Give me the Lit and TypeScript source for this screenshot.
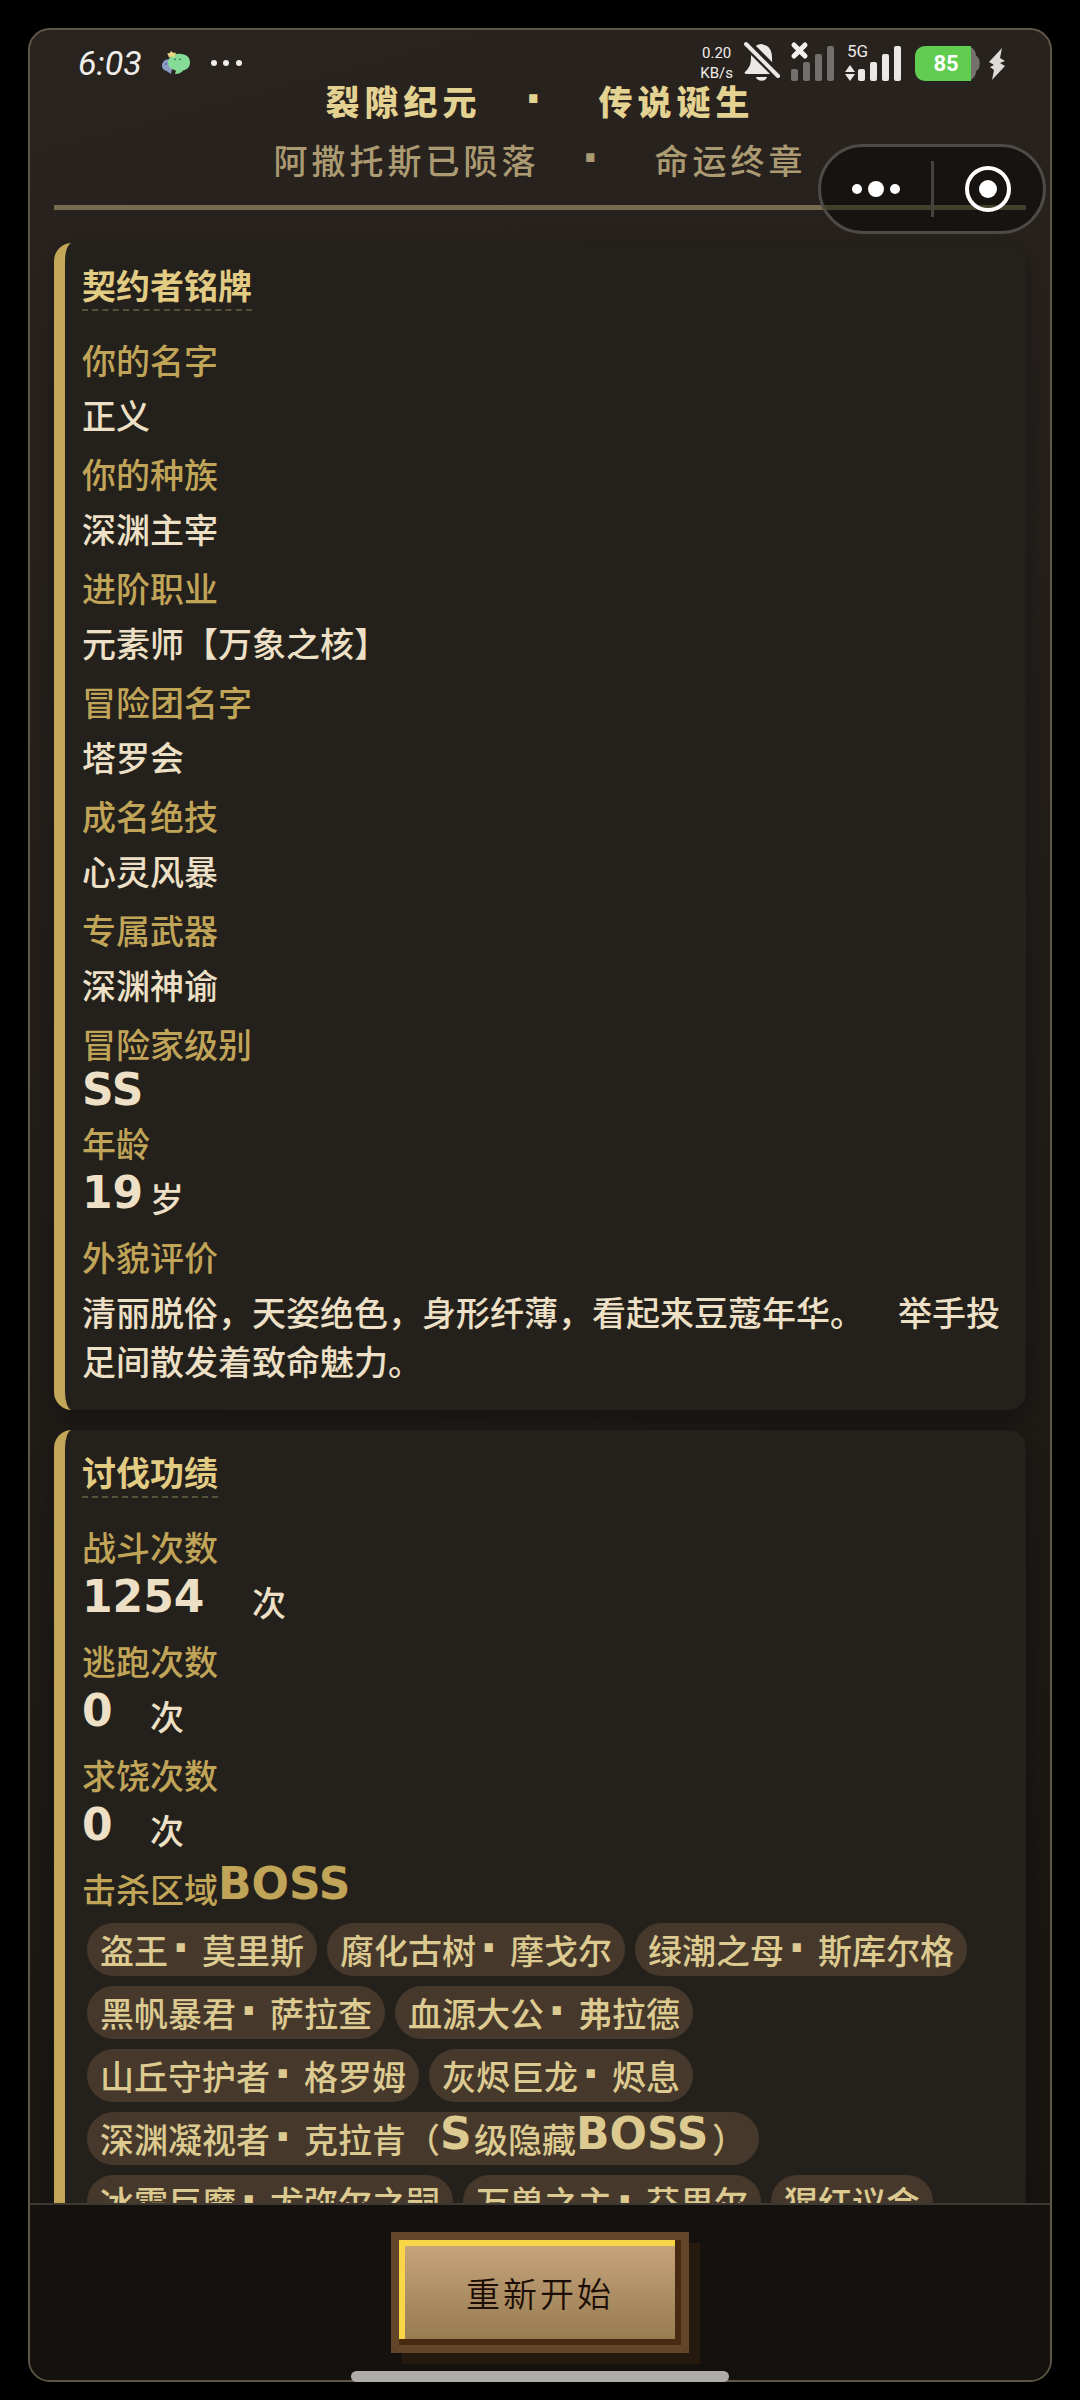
import { LitElement, html, css, svg } from "lit";
import { customElement, property } from "lit/decorators.js";

interface Entry {
  label: string;
  value?: string;
  tags?: string[];
}

const PROFILE: Entry[] = [
  { label: "你的名字", value: "正义" },
  { label: "你的种族", value: "深渊主宰" },
  { label: "进阶职业", value: "元素师【万象之核】" },
  { label: "冒险团名字", value: "塔罗会" },
  { label: "成名绝技", value: "心灵风暴" },
  { label: "专属武器", value: "深渊神谕" },
  { label: "冒险家级别", value: "SS" },
  { label: "年龄", value: "19岁" },
  { label: "外貌评价", value: "清丽脱俗，天姿绝色，身形纤薄，看起来豆蔻年华。　举手投足间散发着致命魅力。" },
];

const DEEDS: Entry[] = [
  { label: "战斗次数", value: "1254　次" },
  { label: "逃跑次数", value: "0　次" },
  { label: "求饶次数", value: "0　次" },
  {
    label: "击杀区域BOSS",
    tags: [
      "盗王·莫里斯",
      "腐化古树·摩戈尔",
      "绿潮之母·斯库尔格",
      "黑帆暴君·萨拉查",
      "血源大公·弗拉德",
      "山丘守护者·格罗姆",
      "灰烬巨龙·烬息",
      "深渊凝视者·克拉肯（S级隐藏BOSS）",
      "冰霜巨魔·尤弥尔之嗣",
      "万兽之主·芬里尔",
      "猩红议会",
    ],
  },
];

/* Latin runs and middle dots get their own face and occupy whole text cells. */
const rich = (text: string) =>
  text.split(/([A-Za-z0-9]+|·)/).filter(Boolean).map((part) => {
    if (part === "·") return html`<span class="dot">·</span>`;
    if (/^[A-Za-z0-9]+$/.test(part))
      return html`<span class="latin" style="width:${part.length}em"><b class="glyphs">${part}</b></span>`;
    return part;
  });

const richStyles = css`
  .latin {
    display: inline-block;
    line-height: 0;
    white-space: nowrap;
    vertical-align: 4px;
  }
  .glyphs {
    font: 700 44px/0 "DejaVu Sans", sans-serif;
  }
  .dot {
    display: inline-block;
    box-sizing: border-box;
    width: 34px;
    padding-left: 4px;
    font: 700 46px/0 "DejaVu Sans", sans-serif;
    letter-spacing: 0;
    text-align: left;
  }
`;

@customElement("status-bar")
export class StatusBar extends LitElement {
  static styles = css`
    :host {
      display: flex;
      justify-content: space-between;
      align-items: center;
      color: #f0eeea;
      font-family: "Roboto", sans-serif;
    }
    .side {
      display: flex;
      align-items: center;
      gap: 11px;
    }
    .left {
      gap: 20px;
    }
    .time {
      font-size: 34px;
      font-style: italic;
      line-height: 42px;
    }
    .speed {
      display: flex;
      flex-direction: column;
      font-size: 15px;
      line-height: 20px;
      text-align: center;
    }
    svg {
      display: block;
      overflow: visible;
      font-family: "Roboto", sans-serif;
    }
  `;

  private bars(xs: number[], fill: string) {
    const tops = [27, 20, 12, 4];
    return xs.map((x, i) => svg`<rect x=${x} y=${tops[i]} width="7" height=${39 - tops[i]} rx="2" fill=${fill} />`);
  }

  render() {
    return html`
      <div class="side left">
        <span class="time">6:03</span>
        <svg width="28" height="24" viewBox="0 0 28 26" preserveAspectRatio="none" aria-hidden="true">
          <path d="M7 9C2 9 0 13 0 16c0 3 2 5 5 6l4 3 1-5 3-9z" fill="#8d9cc4" />
          <path d="M17 3C10 3 6 8 6 13c0 4 3 7 8 8l-1 4c4 0 7-2 8-4 5-1 7-4 7-9 0-6-5-9-11-9z" fill="#84dc96" />
          <path d="M9 0l2 2 3 0-1 3 0 2-3-1-3 1-1-3-1-1 3-1z" fill="#ecd985" />
          <circle cx="13" cy="9" r="1" fill="#40765b" />
          <circle cx="18" cy="9" r="1" fill="#40765b" />
          <circle cx="4" cy="14" r="1" fill="#546391" />
        </svg>
        <svg width="32" height="8" viewBox="0 0 32 8" aria-hidden="true">
          <circle cx="4" cy="4" r="3" fill="#f0eeea" />
          <circle cx="16" cy="4" r="3" fill="#f0eeea" />
          <circle cx="29" cy="4" r="3" fill="#f0eeea" />
        </svg>
      </div>
      <div class="side">
        <div class="speed"><span>0.20</span><span>KB/s</span></div>
        <svg width="36" height="42" viewBox="0 0 36 42" aria-hidden="true">
          <path d="M17 2C10 3 7 8 7 15c0 8-2 11-6 15-1 1 0 2 1 2h30c-3-4-4-8-4-17C28 8 25 3 17 2z" fill="#ebe9e6" />
          <path d="M12 35h11c-1 5-10 5-11 0z" fill="#ebe9e6" />
          <path d="M1 0l35 35" stroke="#28231f" stroke-width="10" />
          <path d="M2 2l32 32" stroke="#ebe9e6" stroke-width="4" stroke-linecap="round" />
        </svg>
        <svg width="43" height="42" viewBox="0 0 43 42" aria-hidden="true">
          <path d="M3 3l11 11M14 3L3 14" stroke="#f4f2ef" stroke-width="5" stroke-linecap="round" />
          ${this.bars([0, 12, 24, 36], "#72706c")}
        </svg>
        <svg width="56" height="42" viewBox="0 0 56 42">
          <text x="2" y="15" font-size="17" fill="#ebe9e6">5G</text>
          <path d="M5 23l5 7H0zM0 32h10l-5 7z" fill="#ebe9e6" />
          ${this.bars([13, 25, 37, 49], "#ebe9e6")}
        </svg>
        <svg width="65" height="42" viewBox="-3 0 65 42">
          <path d="M50 4c7 0 11 4 11 10 5 1 5 14 0 15 0 6-4 10-11 10z" fill="#75726e" />
          <path d="M11 4h45v35H11C4 39 0 35 0 28V15C0 8 4 4 11 4z" fill="#60cd50" />
          <text x="31" y="29" font-size="22" font-weight="700" text-anchor="middle" fill="#ffffff">85</text>
        </svg>
        <svg width="18" height="42" viewBox="0 0 18 42" aria-hidden="true">
          <path d="M14 6L1 20l5 3-4 2 4 3-2 10 13-14-5-3 5-2-5-3z" fill="#dddbd8" />
        </svg>
      </div>
    `;
  }
}

@customElement("record-card")
export class RecordCard extends LitElement {
  @property() heading = "";
  @property({ attribute: false }) entries: Entry[] = [];

  static styles = [
    richStyles,
    css`
      :host {
        display: block;
      }
      .card {
        padding: 17px 17px 15px;
        border-left: 11px solid #c1a757;
        border-radius: 18px;
        background: #24201c;
        box-shadow: 0 8px 22px rgba(0, 0, 0, 0.3);
      }
      .heading {
        display: table;
        margin: 0 0 24px;
        border-bottom: 2px dashed #5a513a;
        color: #e2cc84;
        font-size: 34px;
        font-weight: 700;
        line-height: 49px;
      }
      .list {
        margin: 0;
      }
      .entry {
        margin-bottom: 10px;
      }
      .label {
        margin-bottom: 6px;
        color: #c0a457;
        font-weight: 500;
      }
      .value {
        margin: 0;
        color: #ede0c6;
        font-weight: 500;
      }
      .compact {
        line-height: 34px;
      }
      .compact .latin {
        vertical-align: baseline;
      }
      .tags {
        display: flex;
        flex-wrap: wrap;
        gap: 10px;
        margin: 0;
        padding: 4px 5px;
        list-style: none;
      }
      .tag {
        padding: 2px 13px;
        border-radius: 28px;
        background: #46392b;
        color: #dcca91;
        white-space: nowrap;
      }
    `,
  ];

  render() {
    return html`
      <section class="card">
        <h2 class="heading">${this.heading}</h2>
        <dl class="list">
          ${this.entries.map(
            (e) => html`
              <div class="entry">
                <dt class="label">${rich(e.label)}</dt>
                ${e.tags
                  ? html`<dd class="value"><ul class="tags">${e.tags.map((t) => html`<li class="tag">${rich(t)}</li>`)}</ul></dd>`
                  : html`<dd class="value ${/^[A-Z]+$/.test(e.value ?? "") ? "compact" : ""}">${rich(e.value ?? "")}</dd>`}
              </div>
            `,
          )}
        </dl>
      </section>
    `;
  }
}

@customElement("app-root")
export class AppRoot extends LitElement {
  static styles = [
    richStyles,
    css`
      :host {
        display: block;
        box-sizing: border-box;
        height: 100vh;
        padding: 28px 28px 18px;
        background: #000000;
        font-family: "Noto Sans CJK SC", sans-serif;
        font-size: 34px;
        line-height: 49px;
        text-spacing-trim: space-all;
      }
      .frame {
        position: relative;
        display: flex;
        flex-direction: column;
        box-sizing: border-box;
        height: 100%;
        border: 2px solid #5f5646;
        border-radius: 22px;
        background: linear-gradient(165deg, #2a2420, #171410);
      }
      .status {
        position: absolute;
        top: 12px;
        left: 48px;
        right: 44px;
      }
      .scroll {
        flex: 1;
        min-height: 0;
        display: flex;
        flex-direction: column;
        padding: 46px 24px 0;
        overflow: auto;
        scrollbar-width: none;
      }
      .header {
        flex: none;
        margin-bottom: 33px;
        padding-bottom: 21px;
        border-bottom: 5px solid #766b4d;
        text-align: center;
      }
      .header .dot {
        width: 39px;
      }
      .title {
        margin: 0 0 10px;
        color: #e3d291;
        font-size: 34px;
        font-weight: 900;
        line-height: 49px;
        letter-spacing: 5px;
      }
      .subtitle {
        margin: 0;
        color: #ac9b72;
        font-weight: 500;
        letter-spacing: 4px;
      }
      .cards {
        display: flex;
        flex-direction: column;
        gap: 20px;
      }
      .capsule {
        position: absolute;
        top: 114px;
        right: 4px;
        display: grid;
        grid-template-columns: 1fr 3px 1fr;
        align-items: center;
        box-sizing: border-box;
        width: 228px;
        height: 90px;
        border: 3px solid #4e4a46;
        border-radius: 45px;
        background: rgba(0, 0, 0, 0.42);
      }
      .rule {
        height: 56px;
        background: #45413d;
      }
      .tool {
        display: grid;
        place-items: center;
        height: 100%;
        padding: 0;
        border: 0;
        background: none;
      }
      .footer {
        flex: none;
        display: flex;
        justify-content: center;
        padding: 27px;
        border-top: 2px solid #3d3831;
        border-radius: 0 0 20px 20px;
        background: #15110e;
      }
      .restart {
        height: 121px;
        padding: 0 67px;
        border: 8px solid #63452a;
        background: linear-gradient(#c9a67c, #94794f);
        box-shadow: inset -6px -6px 0 #472a10, inset 6px 6px 0 #f8d648, 11px 11px 0 #26190e;
        color: #1c0e06;
        font: 350 34px/49px "Noto Sans CJK SC", sans-serif;
        letter-spacing: 3px;
      }
      .home {
        position: absolute;
        bottom: -2px;
        left: 50%;
        width: 378px;
        height: 11px;
        margin-left: -189px;
        border-radius: 6px;
        background: #adaca8;
      }
    `,
  ];

  render() {
    return html`
      <main class="frame">
        <div class="scroll">
          <header class="header">
            <h1 class="title">裂隙纪元　${rich("·")}　传说诞生</h1>
            <p class="subtitle">阿撒托斯已陨落　${rich("·")}　命运终章</p>
          </header>
          <div class="cards">
            <record-card heading="契约者铭牌" .entries=${PROFILE}></record-card>
            <record-card heading="讨伐功绩" .entries=${DEEDS}></record-card>
          </div>
        </div>
        <footer class="footer">
          <button class="restart" type="button">重新开始</button>
        </footer>
        <status-bar class="status"></status-bar>
        <div class="capsule">
          <button class="tool" type="button" aria-label="更多">
            <svg width="50" height="18" viewBox="0 0 50 18">
              <circle cx="6" cy="9" r="5" fill="#fff" />
              <circle cx="25" cy="9" r="8" fill="#fff" />
              <circle cx="44" cy="9" r="5" fill="#fff" />
            </svg>
          </button>
          <span class="rule"></span>
          <button class="tool" type="button" aria-label="关闭">
            <svg width="48" height="48" viewBox="0 0 48 48">
              <circle cx="24" cy="24" r="21" fill="none" stroke="#fff" stroke-width="4" />
              <circle cx="24" cy="24" r="9" fill="#fff" />
            </svg>
          </button>
        </div>
        <div class="home"></div>
      </main>
    `;
  }
}
